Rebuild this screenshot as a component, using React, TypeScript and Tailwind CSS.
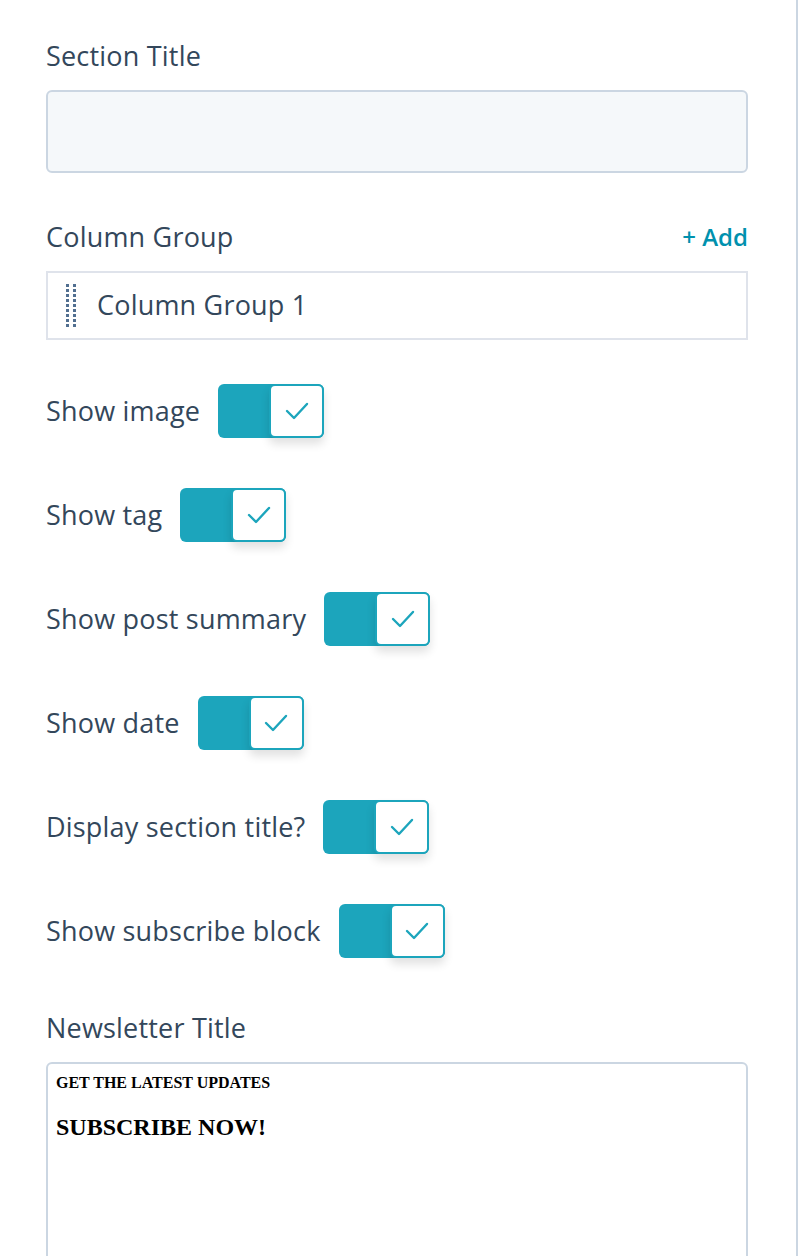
import React from "react";

const toggles = [
  "Show image",
  "Show tag",
  "Show post summary",
  "Show date",
  "Display section title?",
  "Show subscribe block",
];

function Toggle() {
  return (
    <div className="relative flex h-[54px] w-[106px] rounded-[6px] bg-[#1ca5bc]">
      <div className="absolute right-0 top-0 flex h-[54px] w-[55px] items-center justify-center rounded-[6px] border-2 border-[#1ca5bc] bg-white shadow-[0_6px_10px_rgba(0,0,0,0.12)]">
        <svg width="24" height="18" viewBox="0 0 24 18" fill="none">
          <path d="M2 9 L9 16 L22 2" stroke="#1ca5bc" strokeWidth="2.4" strokeLinecap="round" strokeLinejoin="round" />
        </svg>
      </div>
    </div>
  );
}

function DragHandle() {
  return (
    <div className="grid grid-cols-2 gap-x-[4px] gap-y-[2px]">
      {Array.from({ length: 18 }).map((_, i) => (
        <div key={i} className="h-[3px] w-[3px] bg-[#516f90]" />
      ))}
    </div>
  );
}

export default function App() {
  return (
    <div className="flex h-[1256px] w-[804px] overflow-hidden bg-white" style={{ fontFamily: "'Open Sans', 'Noto Sans', sans-serif" }}>
      <div className="w-[796px] overflow-hidden pl-[46px] pr-[48px] pt-[38px] text-[#33475b]">
        {/* Section Title */}
        <div className="text-[27px] leading-[36px] tracking-[0.2px]">Section Title</div>
        <div className="mt-[16px] h-[83px] w-[702px] rounded-[6px] border-2 border-[#cbd6e2] bg-[#f5f8fa]" />

        {/* Column Group */}
        <div className="mt-[46px] flex w-[702px] items-center justify-between">
          <div className="text-[27px] leading-[36px] tracking-[0.2px]">Column Group</div>
          <div className="text-[24px] font-semibold text-[#0091ae]">+ Add</div>
        </div>
        <div className="mt-[16px] flex h-[69px] w-[702px] items-center border-2 border-[#dfe3eb] pl-[18px]">
          <DragHandle />
          <span className="ml-[21px] text-[27px] tracking-[0.2px]">Column Group 1</span>
        </div>

        {/* Toggles */}
        <div className="mt-[44px] flex flex-col gap-[50px]">
          {toggles.map((t) => (
            <div key={t} className="flex items-center gap-[18px]">
              <span className="text-[27px] leading-[36px] tracking-[0.2px]">{t}</span>
              <Toggle />
            </div>
          ))}
        </div>

        {/* Newsletter Title */}
        <div className="mt-[52px] text-[27px] leading-[36px] tracking-[0.2px]">Newsletter Title</div>
        <div className="mt-[16px] h-[260px] w-[702px] rounded-[6px] border-2 border-[#cbd6e2] px-[8px] pt-[7px] text-black" style={{ fontFamily: "'Liberation Serif', serif" }}>
          <div className="text-[16px] font-bold">GET THE LATEST UPDATES</div>
          <div className="mt-[14px] text-[24px] font-bold">SUBSCRIBE NOW!</div>
        </div>
      </div>
      <div className="h-[1256px] w-[2px] bg-[#cbd6e2]" />
    </div>
  );
}
